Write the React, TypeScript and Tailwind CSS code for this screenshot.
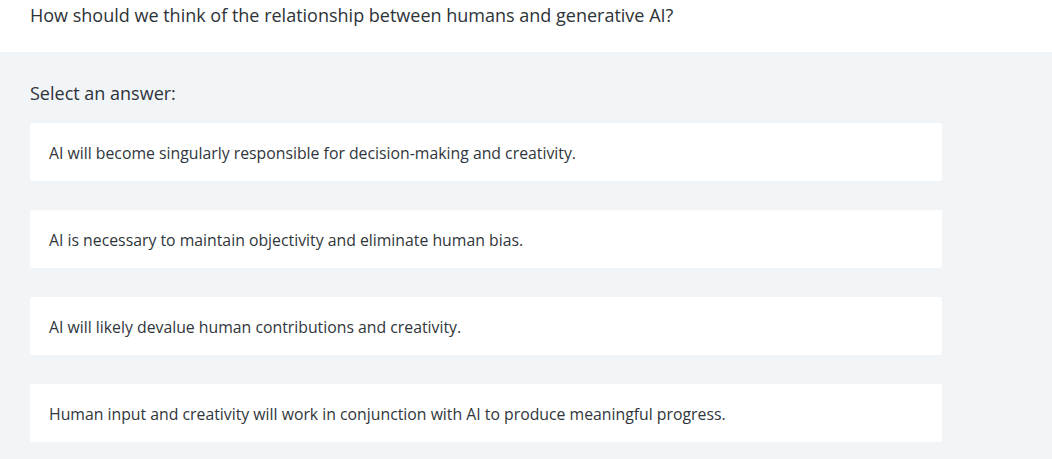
import React from 'react';

const options = [
  'AI will become singularly responsible for decision-making and creativity.',
  'AI is necessary to maintain objectivity and eliminate human bias.',
  'AI will likely devalue human contributions and creativity.',
  'Human input and creativity will work in conjunction with AI to produce meaningful progress.',
];

export default function App() {
  return (
    <div className="w-[1052px] h-[459px] overflow-hidden bg-[#f2f5f8] font-['Open_Sans',sans-serif] text-[#333a40]">
      <div className="h-[52px] bg-white px-[30px]">
        <h1 className="text-[18px] leading-[30px] text-[#2d3338]">
          How should we think of the relationship between humans and generative AI?
        </h1>
      </div>

      <div className="px-[30px] pt-[28px]">
        <p className="text-[18px] leading-[26px] text-[#2d3338]">Select an answer:</p>
        <div className="mt-[17px] flex w-[912px] flex-col gap-[29px]">
          {options.map((opt) => (
            <button
              key={opt}
              className="flex h-[58px] items-center rounded-[3px] bg-white px-[19px] pt-[3px] text-left text-[15.8px] text-[#30363b]"
            >
              {opt}
            </button>
          ))}
        </div>
      </div>
    </div>
  );
}
